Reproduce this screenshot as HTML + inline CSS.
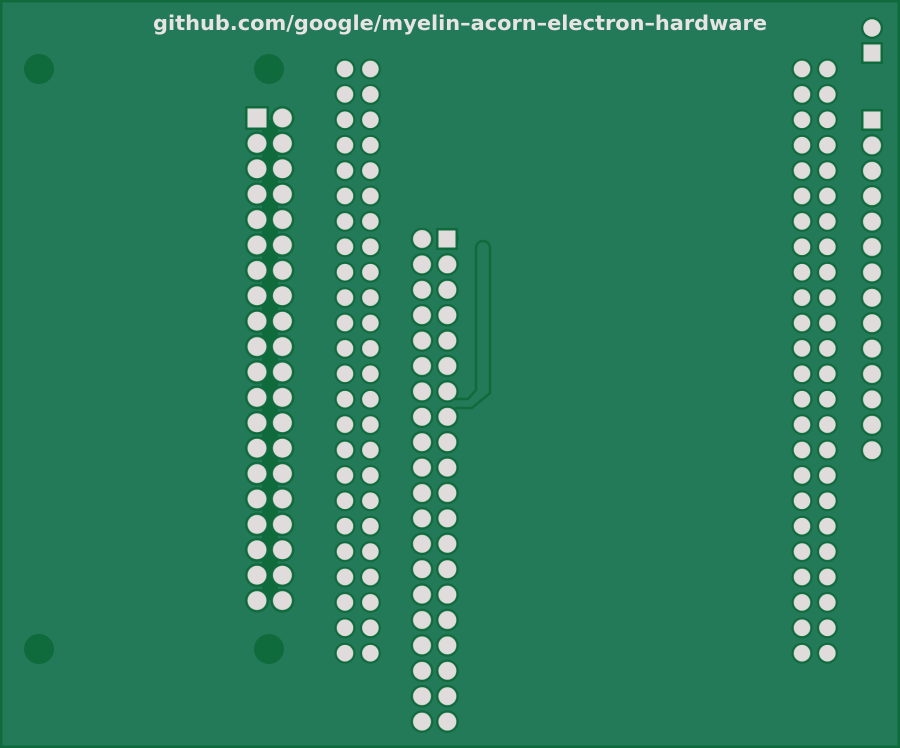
<!DOCTYPE html>
<html><head><style>
html,body{margin:0;padding:0;background:#237a58;}
svg{display:block}
</style></head><body>
<svg width="900" height="748" viewBox="0 0 900 748" xmlns="http://www.w3.org/2000/svg">
<defs>
<pattern id="pL" patternUnits="userSpaceOnUse" x="244.3" y="105.3" width="25.4" height="25.4">
<circle cx="12.7" cy="12.7" r="12" fill="#0f6a3c"/><circle cx="12.7" cy="12.7" r="9.5" fill="#e0dcdc"/></pattern>
<pattern id="pS" patternUnits="userSpaceOnUse" x="332.3" y="56.3" width="25.4" height="25.4">
<circle cx="12.7" cy="12.7" r="10.5" fill="#0f6a3c"/><circle cx="12.7" cy="12.7" r="8.3" fill="#e0dcdc"/></pattern>
<pattern id="pS2" patternUnits="userSpaceOnUse" x="789.3" y="56.3" width="25.4" height="25.4">
<circle cx="12.7" cy="12.7" r="10.5" fill="#0f6a3c"/><circle cx="12.7" cy="12.7" r="8.3" fill="#e0dcdc"/></pattern>
<pattern id="pM" patternUnits="userSpaceOnUse" x="409.3" y="226.3" width="25.4" height="25.4">
<circle cx="12.7" cy="12.7" r="11.3" fill="#0f6a3c"/><circle cx="12.7" cy="12.7" r="9" fill="#e0dcdc"/></pattern>
<pattern id="pR" patternUnits="userSpaceOnUse" x="859.3" y="107.3" width="25.4" height="25.4">
<circle cx="12.7" cy="12.7" r="11.3" fill="#0f6a3c"/><circle cx="12.7" cy="12.7" r="9" fill="#e0dcdc"/></pattern>
</defs>
<rect x="1" y="1" width="898" height="746" fill="#237a58" stroke="#0f6a3c" stroke-width="3"/>
<text x="153" y="30" textLength="614" lengthAdjust="spacingAndGlyphs" font-family="DejaVu Sans, sans-serif" font-weight="bold" font-size="20" fill="#e8e4e4">github.com/google/myelin–acorn–electron–hardware</text>
<circle cx="39" cy="69" r="15" fill="#0f6a3c"/>
<circle cx="269" cy="69" r="15" fill="#0f6a3c"/>
<circle cx="39" cy="649" r="15" fill="#0f6a3c"/>
<circle cx="269" cy="649" r="15" fill="#0f6a3c"/>
<rect x="262" y="120" width="16" height="480" fill="#0f6a3c"/>
<rect x="244.3" y="105.3" width="50.8" height="508" fill="url(#pL)"/>
<rect x="332.3" y="56.3" width="50.8" height="609.6" fill="url(#pS)"/>
<rect x="789.3" y="56.3" width="50.8" height="609.6" fill="url(#pS2)"/>
<rect x="409.3" y="226.3" width="50.8" height="508" fill="url(#pM)"/>
<rect x="859.3" y="132.7" width="25.4" height="330.2" fill="url(#pR)"/>
<path d="M455 408 H472 L490 393 V248 A7 7 0 0 0 476 248 V390 L468 399 H455" fill="none" stroke="#0f6a3c" stroke-width="2.5"/>
<rect x="245" y="106" width="24" height="24" fill="#0f6a3c"/><rect x="247.5" y="108.5" width="19" height="19" fill="#e0dcdc"/>
<rect x="436" y="228" width="22" height="22" fill="#0f6a3c"/><rect x="438.5" y="230.5" width="17" height="17" fill="#e0dcdc"/>
<rect x="861" y="109" width="22" height="22" fill="#0f6a3c"/><rect x="863.5" y="111.5" width="17" height="17" fill="#e0dcdc"/>
<circle cx="872" cy="28" r="11" fill="#0f6a3c"/><circle cx="872" cy="28" r="8.7" fill="#e0dcdc"/>
<rect x="861" y="42" width="22" height="22" fill="#0f6a3c"/><rect x="863.5" y="44.5" width="17" height="17" fill="#e0dcdc"/>
</svg>
</body></html>
